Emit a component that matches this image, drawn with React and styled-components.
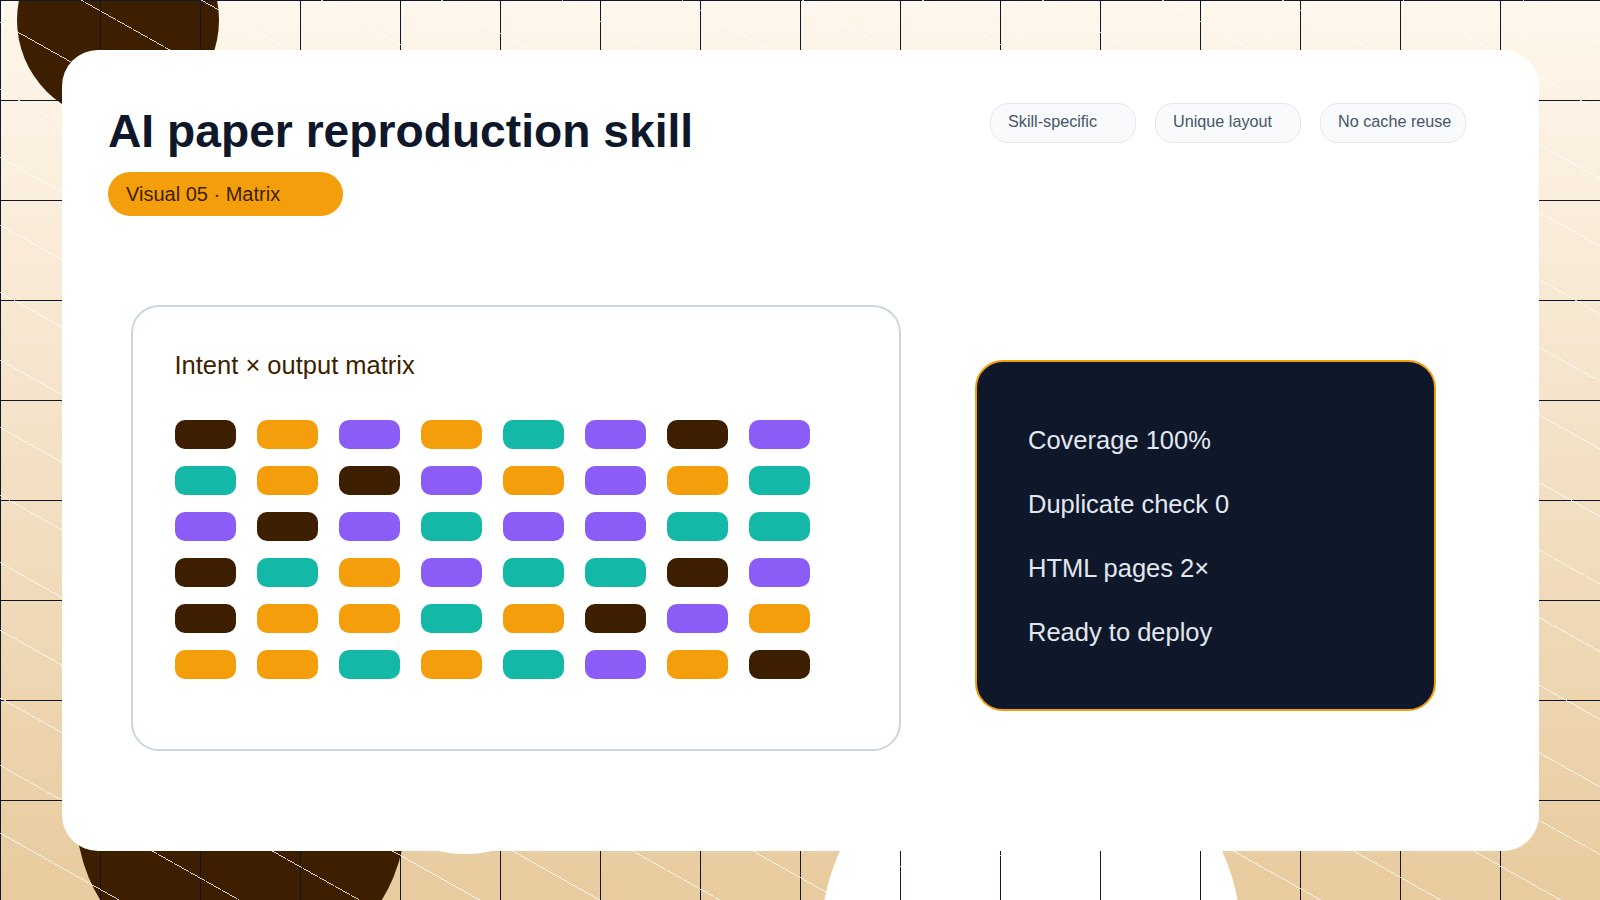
import styled, { createGlobalStyle } from "styled-components";

const GlobalStyle = createGlobalStyle`
    * {
        box-sizing: border-box;
    }

    body {
        margin: 0;
        font-family: "Liberation Sans", Arial, sans-serif;
    }
`;

const tones = {
    D: "#3d1f00",
    A: "#f59e0b",
    P: "#8b5cf6",
    T: "#14b8a6",
};

const matrix = [
    "DAPATPDP",
    "TADPAPAT",
    "PDPTPPTT",
    "DTAPTTDP",
    "DAATADPA",
    "AATATPAD",
];

const tags = ["Skill-specific", "Unique layout", "No cache reuse"];
const stats = ["Coverage 100%", "Duplicate check 0", "HTML pages 2×", "Ready to deploy"];

const App = () => {
    return (
        <Stage>
            <GlobalStyle />
            <Blob $x={17} $y={-81} $size={202} $color="#3d1f00" />
            <Blob $x={76} $y={649} $size={330} $color="#3d1f00" />
            <Blob $x={821} $y={728} $size={420} $color="#ffffff" />
            <Blob $x={345} $y={614} $size={240} $color="#ffffff" />
            <Pattern />

            <Card>
                <Header>
                    <TitleBlock>
                        <Title>AI paper reproduction skill</Title>
                        <Badge>Visual 05 · Matrix</Badge>
                    </TitleBlock>
                    <Tags>
                        {tags.map((tag) => (
                            <Tag key={tag}>{tag}</Tag>
                        ))}
                    </Tags>
                </Header>

                <Main>
                    <MatrixPanel>
                        <MatrixTitle>Intent × output matrix</MatrixTitle>
                        <MatrixGrid>
                            {matrix.map((row, r) =>
                                row.split("").map((tone, c) => <Cell key={`${r}-${c}`} $tone={tone} />)
                            )}
                        </MatrixGrid>
                    </MatrixPanel>

                    <StatsPanel>
                        {stats.map((stat) => (
                            <Stat key={stat}>{stat}</Stat>
                        ))}
                    </StatsPanel>
                </Main>
            </Card>
        </Stage>
    );
};

export default App;

const Stage = styled.div`
    position: relative;
    width: 1600px;
    height: 900px;
    padding: 50px 61px 49px 62px;
    overflow: hidden;
    background: linear-gradient(180deg, #fff7ed, #e8cb9e);
`;

const Blob = styled.div`
    position: absolute;
    left: ${(p) => p.$x}px;
    top: ${(p) => p.$y}px;
    width: ${(p) => p.$size}px;
    height: ${(p) => p.$size}px;
    border-radius: 50%;
    background: ${(p) => p.$color};
`;

const Pattern = styled.div`
    position: absolute;
    inset: 0;
    background:
        repeating-linear-gradient(
            to top right,
            transparent 0 57.98px,
            rgba(255, 255, 255, 0.8) 57.98px 58.83px,
            transparent 58.83px 58.9px
        ),
        linear-gradient(90deg, #0f172a 1px, transparent 1px) 0 0 / 100px 100px,
        linear-gradient(180deg, #0f172a 1px, transparent 1px) 0 0 / 100px 100px;
`;

const Card = styled.main`
    position: relative;
    height: 801px;
    padding: 53px 73px 0 46px;
    border-radius: 36px;
    background: #ffffff;
`;

const Header = styled.header`
    display: flex;
    justify-content: space-between;
    align-items: flex-start;
`;

const TitleBlock = styled.div`
    display: flex;
    flex-direction: column;
    align-items: flex-start;
    gap: 13px;
`;

const Title = styled.h1`
    margin: 0;
    font-size: 46.2px;
    line-height: 56px;
    font-weight: 700;
    color: #0f172a;
`;

const Badge = styled.span`
    width: 235px;
    height: 44px;
    padding: 0 18px;
    border-radius: 22px;
    background: #f59e0b;
    color: #3d1f00;
    font-size: 20px;
    line-height: 44px;
`;

const Tags = styled.div`
    display: flex;
    gap: 19px;
`;

const Tag = styled.span`
    width: 146px;
    height: 40px;
    padding: 0 17px;
    border: 1px solid #e2e8f0;
    border-radius: 18px;
    background: #f8fafc;
    color: #475569;
    font-size: 16.2px;
    line-height: 35px;
    white-space: nowrap;
`;

const Main = styled.section`
    display: flex;
    align-items: flex-start;
    gap: 74px;
    margin: 89px 0 0 22.5px;
`;

const MatrixPanel = styled.div`
    width: 770.5px;
    height: 446px;
    padding: 43px 42px 42px;
    border: 2px solid #cbd5e1;
    border-radius: 28px;
    background: #ffffff;
`;

const MatrixTitle = styled.h2`
    margin: 0 0 40px;
    font-size: 25.5px;
    line-height: 30px;
    font-weight: 400;
    color: #3d1f00;
`;

const MatrixGrid = styled.div`
    display: grid;
    grid-template-columns: repeat(8, 61px);
    grid-auto-rows: 29px;
    gap: 17px 21px;
`;

const Cell = styled.div`
    border-radius: 10px;
    background: ${(p) => tones[p.$tone]};
`;

const StatsPanel = styled.div`
    display: flex;
    flex-direction: column;
    gap: 34px;
    width: 461px;
    height: 351px;
    margin-top: 55px;
    padding: 63px 51px;
    border: 2px solid #f59e0b;
    border-radius: 28px;
    background: #0f172a;
`;

const Stat = styled.div`
    font-size: 25.5px;
    line-height: 30px;
    color: #e2e8f0;
`;
